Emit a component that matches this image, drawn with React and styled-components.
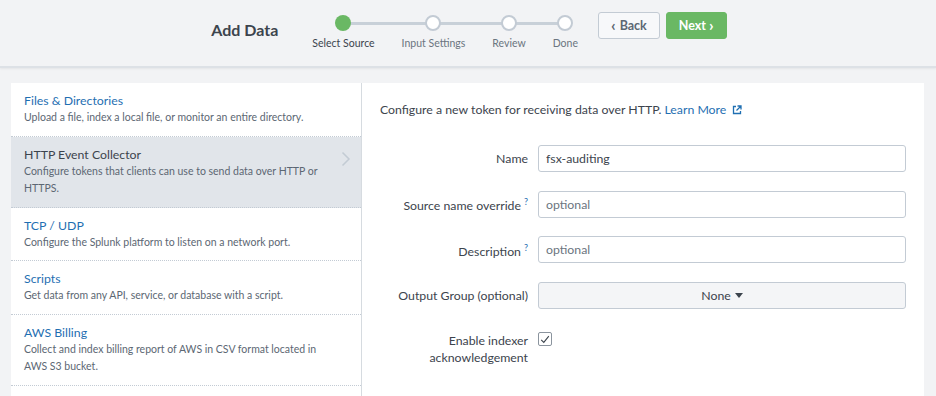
import React from "react";
import styled, { createGlobalStyle } from "styled-components";

const GlobalStyle = createGlobalStyle`
  html, body {
    margin: 0;
    padding: 0;
    background: #f2f3f5;
    font-family: Lato, "Open Sans", "Liberation Sans", sans-serif;
    color: #3c444d;
    overflow: hidden;
  }
  * {
    box-sizing: border-box;
  }
`;

const steps = [
  { label: "Select Source", done: true },
  { label: "Input Settings" },
  { label: "Review" },
  { label: "Done" },
];

const sources = [
  {
    title: "Files & Directories",
    desc: "Upload a file, index a local file, or monitor an entire directory.",
  },
  {
    title: "HTTP Event Collector",
    desc: "Configure tokens that clients can use to send data over HTTP or HTTPS.",
    active: true,
  },
  {
    title: "TCP / UDP",
    desc: "Configure the Splunk platform to listen on a network port.",
  },
  {
    title: "Scripts",
    desc: "Get data from any API, service, or database with a script.",
  },
  {
    title: "AWS Billing",
    desc: "Collect and index billing report of AWS in CSV format located in AWS S3 bucket.",
  },
];

const App = () => {
  return (
    <>
      <GlobalStyle />
      <Header>
        <Title>Add Data</Title>
        <Stepper>
          {steps.map((step, i) => (
            <Step key={step.label} first={i === 0} last={i === steps.length - 1}>
              <Dot done={step.done} />
              <StepLabel current={step.done}>{step.label}</StepLabel>
            </Step>
          ))}
        </Stepper>
        <Buttons>
          <Button>
            <Chev>‹</Chev>Back
          </Button>
          <Button primary>
            Next<Chev right>›</Chev>
          </Button>
        </Buttons>
      </Header>
      <Main>
        <SourceList>
          {sources.map((s) => (
            <SourceItem key={s.title} active={s.active}>
              <SourceTitle active={s.active}>{s.title}</SourceTitle>
              <SourceDesc>{s.desc}</SourceDesc>
              {s.active && (
                <Arrow width="10" height="16" viewBox="0 0 10 16">
                  <path d="M1.5 1.5 L8 8 L1.5 14.5" fill="none" stroke="#c3cbd4" strokeWidth="1.5" />
                </Arrow>
              )}
            </SourceItem>
          ))}
        </SourceList>
        <Content>
          <Intro>
            Configure a new token for receiving data over HTTP.{" "}
            <Link>
              Learn More
              <svg width="10" height="10" viewBox="0 0 10 10">
                <path d="M4 1.5 H1.5 V8.5 H8.5 V6" fill="none" stroke="#1f6fb2" strokeWidth="1.3" />
                <path d="M5.5 1 H9 V4.5 M9 1 L4.5 5.5" fill="none" stroke="#1f6fb2" strokeWidth="1.3" />
              </svg>
            </Link>
          </Intro>
          <Form>
            <Label>Name</Label>
            <Input defaultValue="fsx-auditing" />
            <Label>
              Source name override<Help>?</Help>
            </Label>
            <Input placeholder="optional" />
            <Label>
              Description<Help>?</Help>
            </Label>
            <Input placeholder="optional" />
            <Label>Output Group (optional)</Label>
            <Select>
              None
              <svg width="8" height="5" viewBox="0 0 8 5">
                <path d="M0 0 H8 L4 5 Z" fill="#3c444d" />
              </svg>
            </Select>
            <Label top>Enable indexer acknowledgement</Label>
            <CheckCell>
              <Checkbox>
                <svg width="10" height="9" viewBox="0 0 10 9">
                  <path d="M1.2 4.8 L3.8 7.4 L8.8 1.2" fill="none" stroke="#3c444d" strokeWidth="1.1" />
                </svg>
              </Checkbox>
            </CheckCell>
          </Form>
        </Content>
      </Main>
    </>
  );
};

const Header = styled.div`
  height: 68px;
  display: flex;
  justify-content: center;
  align-items: flex-start;
  padding: 12px 0 0 2px;
  background: #f2f3f5;
  border-bottom: 2px solid #dde1e6;
  box-shadow: 0 1px 2px rgba(0, 0, 0, 0.06);
`;
const Title = styled.h1`
  margin: 8px 34px 0 0;
  font-size: 16px;
  line-height: 20px;
  font-weight: 700;
  color: #3c444d;
`;
const Stepper = styled.div`
  display: flex;
  gap: 27px;
  margin-top: 3px;
`;
const Step = styled.div`
  position: relative;
  display: flex;
  flex-direction: column;
  align-items: center;
  &::before {
    content: "";
    position: absolute;
    top: 7px;
    height: 3px;
    background: #c8d0d8;
    left: ${(p) => (p.first ? "50%" : "-14px")};
    right: ${(p) => (p.last ? "50%" : "-14px")};
  }
`;
const Dot = styled.div`
  position: relative;
  z-index: 1;
  width: 16px;
  height: 16px;
  border-radius: 50%;
  background: ${(p) => (p.done ? "#6ab864" : "#fff")};
  border: ${(p) => (p.done ? "none" : "2px solid #c3cbd4")};
`;
const StepLabel = styled.div`
  margin-top: 4px;
  font-size: 10.5px;
  line-height: 17px;
  white-space: nowrap;
  color: ${(p) => (p.current ? "#3c444d" : "#6b7580")};
`;
const Buttons = styled.div`
  display: flex;
  gap: 6px;
  margin-left: 20px;
`;
const Button = styled.button`
  height: 27px;
  padding: 0 12px;
  border-radius: 3px;
  font-family: inherit;
  font-size: 12.5px;
  font-weight: 700;
  display: flex;
  align-items: center;
  border: 1px solid ${(p) => (p.primary ? "#6ab864" : "#c3cbd4")};
  background: ${(p) => (p.primary ? "#6ab864" : "#f7f8fa")};
  color: ${(p) => (p.primary ? "#fff" : "#5c6773")};
`;
const Chev = styled.span`
  font-size: 16px;
  line-height: 14px;
  margin: ${(p) => (p.right ? "-1px 0 0 3px" : "-1px 4px 0 0")};
`;
const Main = styled.div`
  display: flex;
  padding: 15px 12px 0 11px;
  height: calc(100vh - 68px);
`;
const SourceList = styled.div`
  width: 351px;
  flex-shrink: 0;
  background: #fff;
  border-right: 1px solid #d6dbe0;
`;
const SourceItem = styled.div`
  position: relative;
  padding: 9px 30px 9px 13px;
  border-bottom: 1px dotted #c3cbd4;
  background: ${(p) => (p.active ? "#e1e5ea" : "#fff")};
`;
const SourceTitle = styled.div`
  font-size: 12.3px;
  line-height: 17px;
  color: ${(p) => (p.active ? "#3c444d" : "#1f6fb2")};
`;
const SourceDesc = styled.div`
  font-size: 10.5px;
  line-height: 17.5px;
  color: #5c6773;
`;
const Arrow = styled.svg`
  position: absolute;
  right: 10px;
  top: 14px;
`;
const Content = styled.div`
  flex: 1;
  background: #fff;
  padding: 18px 18px 0 18px;
`;
const Intro = styled.p`
  margin: 0;
  font-size: 12.3px;
  line-height: 17px;
  color: #3c444d;
`;
const Link = styled.a`
  color: #1f6fb2;
  svg {
    margin-left: 6px;
    vertical-align: -1px;
  }
`;
const Form = styled.div`
  display: grid;
  grid-template-columns: 148px 1fr;
  column-gap: 10px;
  row-gap: 18.5px;
  align-items: center;
  margin-top: 27px;
`;
const Label = styled.div`
  text-align: right;
  font-size: 12.3px;
  line-height: 17px;
  color: #3c444d;
  align-self: ${(p) => (p.top ? "start" : "center")};
  margin-top: ${(p) => (p.top ? "5px" : "0")};
`;
const Help = styled.sup`
  color: #1f6fb2;
  font-size: 9px;
  margin-left: 3px;
`;
const Input = styled.input`
  height: 27px;
  width: 100%;
  padding: 0 7px;
  border: 1px solid #c3cbd4;
  border-radius: 3px;
  font-family: inherit;
  font-size: 12.3px;
  color: #3c444d;
  outline: none;
  &::placeholder {
    color: #6b7580;
  }
`;
const Select = styled.div`
  height: 27px;
  display: flex;
  align-items: center;
  justify-content: center;
  gap: 4px;
  border: 1px solid #c3cbd4;
  border-radius: 3px;
  background: #f4f5f7;
  font-size: 12.3px;
  color: #3c444d;
`;
const CheckCell = styled.div`
  align-self: start;
  margin-top: 5px;
`;
const Checkbox = styled.div`
  width: 14px;
  height: 14px;
  border: 1px solid #8b949e;
  border-radius: 2px;
  display: flex;
  align-items: center;
  justify-content: center;
`;

export default App;
